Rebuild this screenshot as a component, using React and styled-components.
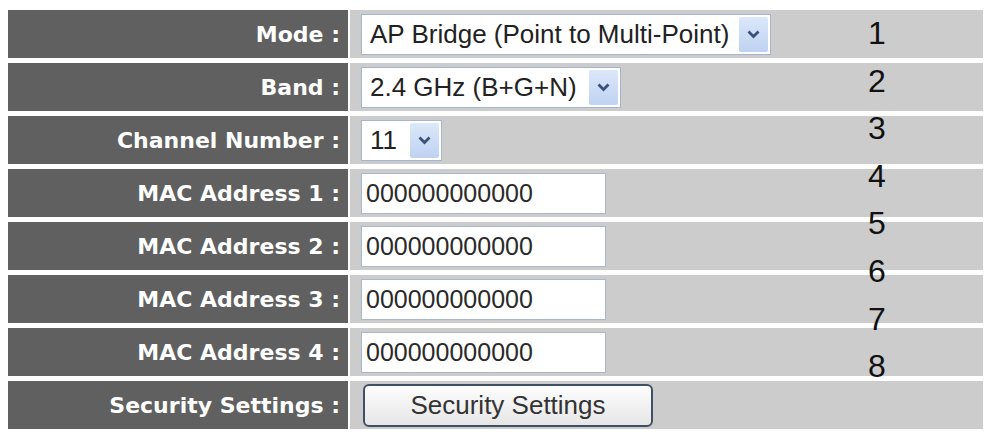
import React from 'react'
import styled, { createGlobalStyle } from 'styled-components'

const GlobalStyle = createGlobalStyle`
  html, body {
    margin: 0;
    padding: 0;
    background: #ffffff;
  }
`

const Page = styled.div`
  position: relative;
  padding: 10px 0 0 8px;
  width: 987px;
  height: 434px;
  box-sizing: border-box;
`

const Form = styled.div`
  display: grid;
  grid-template-columns: 340px 633px;
  grid-auto-rows: 48px;
  column-gap: 2px;
  row-gap: 5px;
`

const Label = styled.div`
  display: flex;
  align-items: center;
  justify-content: flex-end;
  padding-right: 8px;
  background: #606060;
  color: #ffffff;
  font-family: 'DejaVu Sans', Verdana, sans-serif;
  font-weight: bold;
  font-size: 22px;
  white-space: nowrap;
`

const Value = styled.div`
  display: flex;
  align-items: center;
  padding-left: 11px;
  background: #cccccc;
`

const Select = styled.div`
  display: flex;
  align-items: center;
  height: 41px;
  box-sizing: border-box;
  padding: 0 2px 0 8px;
  background: #ffffff;
  border: 1px solid #a3b6cd;
  font-family: 'Liberation Sans', Arial, sans-serif;
  font-size: 26px;
  color: #222222;
  white-space: nowrap;
`

const ArrowButton = styled.span`
  display: flex;
  align-items: center;
  justify-content: center;
  width: 29px;
  height: 35px;
  margin-left: ${(p) => p.$gap || 11}px;
  border-radius: 2px;
  background: linear-gradient(#dce8fa, #bed2f1);
`

const TextInput = styled.div`
  display: flex;
  align-items: center;
  width: 245px;
  height: 41px;
  box-sizing: border-box;
  padding-left: 4px;
  background: #ffffff;
  border: 1px solid #a8b8cc;
  font-family: 'Liberation Sans', Arial, sans-serif;
  font-size: 25px;
  color: #2a2a2a;
`

const Button = styled.button`
  width: 290px;
  height: 43px;
  margin-left: 2px;
  border: 2px solid #3f4f66;
  border-radius: 6px;
  background: linear-gradient(#fdfdfd, #e6e6e6);
  font-family: 'Liberation Sans', Arial, sans-serif;
  font-size: 26px;
  color: #333333;
  padding: 0;
`

const Numbers = styled.div`
  position: absolute;
  left: 860px;
  top: 10px;
  width: 34px;
  display: flex;
  flex-direction: column;
  align-items: center;
  font-family: 'Liberation Sans', Arial, sans-serif;
  font-size: 32px;
  color: #111111;
`

const Num = styled.span`
  height: 47.6px;
  line-height: 47.6px;
`

const Chevron = () => (
  <svg width="13" height="9" viewBox="0 0 13 9">
    <path d="M1.5 1.5 L6.5 6.5 L11.5 1.5" fill="none" stroke="#3b4f7a" strokeWidth="2.8" />
  </svg>
)

const Dropdown = ({ value, gap }) => (
  <Select>
    {value}
    <ArrowButton $gap={gap}>
      <Chevron />
    </ArrowButton>
  </Select>
)

const macs = ['MAC Address 1 :', 'MAC Address 2 :', 'MAC Address 3 :', 'MAC Address 4 :']

const App = () => {
  return (
    <Page>
      <GlobalStyle />
      <Form>
        <Label>Mode :</Label>
        <Value>
          <Dropdown value="AP Bridge (Point to Multi-Point)" gap={10} />
        </Value>
        <Label>Band :</Label>
        <Value>
          <Dropdown value="2.4 GHz (B+G+N)" gap={12} />
        </Value>
        <Label>Channel Number :</Label>
        <Value>
          <Dropdown value="11" gap={13} />
        </Value>
        {macs.map((mac) => (
          <React.Fragment key={mac}>
            <Label>{mac}</Label>
            <Value>
              <TextInput>000000000000</TextInput>
            </Value>
          </React.Fragment>
        ))}
        <Label>Security Settings :</Label>
        <Value>
          <Button>Security Settings</Button>
        </Value>
      </Form>
      <Numbers>
        {[1, 2, 3, 4, 5, 6, 7, 8].map((n) => (
          <Num key={n}>{n}</Num>
        ))}
      </Numbers>
    </Page>
  )
}

export default App
